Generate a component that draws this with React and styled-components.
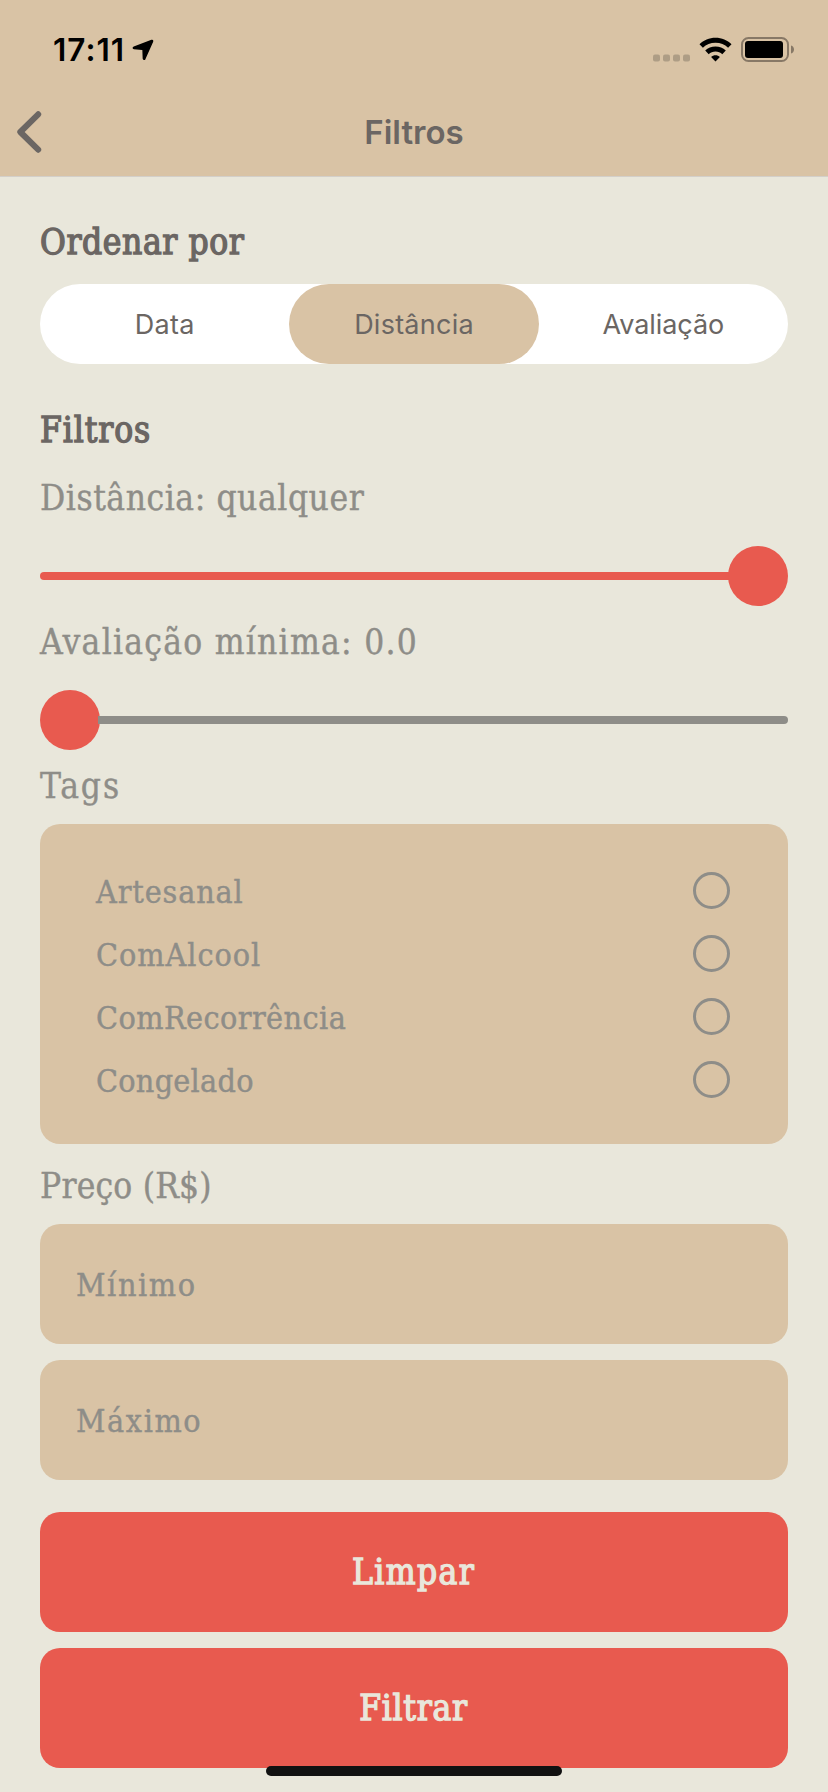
import React from "react";
import styled, { createGlobalStyle } from "styled-components";

const color = {
  sand: "#d9c3a5",
  paper: "#e9e7db",
  coral: "#e85a4f",
  stone: "#8e8d88",
  ink: "#6b6663",
};
const slab = `"DejaVu Serif Condensed", "DejaVu Serif", serif`;
const sans = `Inter, "Liberation Sans", sans-serif`;

const GlobalStyle = createGlobalStyle`
  *, *::before, *::after { box-sizing: border-box; }
  body { margin: 0; background: ${color.paper}; }
`;

const Screen = styled.div`
  position: relative;
  display: flex;
  flex-direction: column;
  width: 828px;
  height: 1792px;
  overflow: hidden;
  background: ${color.paper};
  font-family: ${slab};
`;

const Header = styled.header`
  height: 177px;
  background: ${color.sand};
  border-bottom: 1px solid #d3cfc9;
`;

const StatusBar = styled.div`
  display: flex;
  align-items: center;
  justify-content: space-between;
  height: 88px;
  padding: 12px 33px 0 53px;
  color: #000;
`;

const Clock = styled.span`
  display: flex;
  align-items: center;
  gap: 7px;
  font: 600 31.5px/40px ${sans};
  letter-spacing: 1px;
`;

const StatusIcons = styled.div`
  display: flex;
  align-items: center;
  gap: 9px;
`;

const NavBar = styled.nav`
  display: grid;
  grid-template-columns: 60px 1fr 60px;
  align-items: center;
  height: 88px;
`;

const BackButton = styled.button`
  display: flex;
  padding: 0 0 0 17px;
  border: 0;
  background: none;
  color: ${color.ink};
`;

const NavTitle = styled.h1`
  margin: 0;
  text-align: center;
  color: ${color.ink};
  font: 600 33px/48px ${sans};
`;

const Content = styled.main`
  display: flex;
  flex-direction: column;
  padding: 41px 40px 0;
`;

const SectionTitle = styled.h2`
  margin: 0;
  height: 48px;
  color: ${color.ink};
  font: 400 35px/48px ${slab};
  letter-spacing: ${(p) => p.$tracking}px;
  -webkit-text-stroke: 1.3px ${color.ink};
`;

const Label = styled.div`
  height: 48px;
  color: ${color.stone};
  font-size: 35px;
  line-height: 48px;
  letter-spacing: ${(p) => p.$tracking}px;
  white-space: nowrap;
  -webkit-text-stroke: 0.4px ${color.stone};
`;

const Segments = styled.div`
  display: grid;
  grid-template-columns: repeat(3, 1fr);
  height: 80px;
  margin: 18px 0 42px;
  border-radius: 40px;
  background: #fff;
`;

const Segment = styled.button`
  height: 80px;
  padding: 2px 0 0;
  border: 0;
  border-radius: 40px;
  background: ${(p) => (p.$active ? color.sand : "transparent")};
  color: ${color.ink};
  font: 400 27px/78px ${sans};
  letter-spacing: ${(p) => p.$tracking}px;
`;

const Sliders = styled.section`
  display: flex;
  flex-direction: column;
  gap: 12px;
  padding: 20px 0 12px;
`;

const SliderGroup = styled.div`
  display: flex;
  flex-direction: column;
  gap: 24px;
`;

const Track = styled.div`
  display: flex;
  align-items: center;
  height: 60px;
`;

const Bar = styled.div`
  flex: ${(p) => p.$share};
  height: 8px;
  border-radius: ${(p) => (p.$filled ? "4px 0 0 4px" : "0 4px 4px 0")};
  background: ${(p) => (p.$filled ? color.coral : color.stone)};
`;

const Thumb = styled.div`
  flex: none;
  width: 60px;
  height: 60px;
  margin: 0 ${(p) => (p.$at < 1 ? -2 : 0)}px 0 ${(p) => (p.$at > 0 ? -2 : 0)}px;
  border-radius: 50%;
  background: ${color.coral};
`;

const TagList = styled.ul`
  display: flex;
  flex-direction: column;
  height: 320px;
  margin: 14px 0 18px;
  padding: 35px 58px 0 56px;
  border-radius: 20px;
  background: ${color.sand};
  list-style: none;
`;

const TagRow = styled.li`
  display: flex;
  align-items: center;
  justify-content: space-between;
  height: 63px;
`;

const TagName = styled.span`
  padding-top: 4px;
  color: ${color.stone};
  font-size: 32px;
  line-height: 59px;
  letter-spacing: ${(p) => p.$tracking}px;
  -webkit-text-stroke: 0.4px ${color.stone};
`;

const Radio = styled.span`
  width: 37px;
  height: 37px;
  border: 3px solid ${color.stone};
  border-radius: 50%;
`;

const Fields = styled.div`
  display: flex;
  flex-direction: column;
  gap: 16px;
  margin: 14px 0 32px;
`;

const Field = styled.div`
  display: flex;
  align-items: center;
  height: 120px;
  padding: 1px 36px 0;
  border-radius: 20px;
  background: ${color.sand};
  color: ${color.stone};
  font-size: 32px;
  letter-spacing: 1.6px;
  -webkit-text-stroke: 0.4px ${color.stone};
`;

const Actions = styled.div`
  display: flex;
  flex-direction: column;
  gap: 16px;
`;

const Action = styled.button`
  height: 120px;
  padding: 1px 1px 0 0;
  border: 0;
  border-radius: 20px;
  background: ${color.coral};
  color: ${color.paper};
  font: 400 35px/119px ${slab};
  letter-spacing: ${(p) => p.$tracking}px;
  -webkit-text-stroke: 1.3px ${color.paper};
`;

const HomeIndicator = styled.div`
  position: absolute;
  left: 266px;
  bottom: 16px;
  width: 296px;
  height: 10px;
  border-radius: 5px;
  background: #111;
`;

const LocationArrow = () => (
  <svg width="22" height="22" viewBox="0 0 22 22">
    <path
      d="M19.700 1.500 2 8.200C1 8.600 1.200 9.500 2 9.600L10.300 10.300Q11 10.400 11.100 11L11.400 19.500C11.500 20.500 12.400 20.600 12.800 19.800L20.500 2.400Q20.700 1.200 19.700 1.500Z"
      fill="currentColor"
      stroke="currentColor"
      strokeWidth="1.500"
      strokeLinejoin="round"
    />
  </svg>
);

const StatusGlyphs = () => (
  <StatusIcons>
    <svg width="37" height="26" viewBox="0 0 37 26" fill="#ae9d85">
      {[0, 10, 20, 30].map((x) => (
        <rect key={x} x={x} y="17.500" width="7" height="7" rx="2" />
      ))}
    </svg>
    <svg width="33" height="26" viewBox="0 0 33 26" fill="#000">
      <path d="M16.500.700C10.200.700 4.600 3.200.5 7.200l3.400 3.500C7.200 7.500 11.600 5.700 16.500 5.700s9.300 1.800 12.600 5l3.400-3.500C28.400 3.200 22.800.700 16.500.700Z" />
      <path d="M16.500 9.500c-4 0-7.600 1.500-10.300 4.100l3.500 3.600c1.800-1.700 4.200-2.700 6.800-2.700s5 1 6.800 2.700l3.500-3.600C24.100 11 20.500 9.500 16.500 9.500Z" />
      <path d="M16.500 18.200c-1.700 0-3.200.6-4.400 1.700l4.400 4.600 4.400-4.600c-1.200-1.100-2.700-1.700-4.400-1.700Z" />
    </svg>
    <svg width="54" height="26" viewBox="0 0 54 26">
      <rect x="1" y="1" width="46" height="23" rx="6.500" fill="none" stroke="#877866" strokeWidth="2" />
      <rect x="4" y="4" width="38" height="17" rx="3" fill="#000" />
      <path d="M50 8.500c4 1 4 7 0 8Z" fill="#877866" />
    </svg>
  </StatusIcons>
);

const BackChevron = () => (
  <svg width="25" height="42" viewBox="0 0 25 42" fill="none">
    <path
      d="M21.200 3.300 3.300 21 21.200 38.700"
      stroke="currentColor"
      strokeWidth="6"
      strokeLinecap="round"
      strokeLinejoin="round"
    />
  </svg>
);

const tags = [
  ["Artesanal", 0.85],
  ["ComAlcool", 0.95],
  ["ComRecorrência", 0.42],
  ["Congelado", 0.25],
];

function Slider({ label, tracking, value }) {
  return (
    <SliderGroup>
      <Label $tracking={tracking}>{label}</Label>
      <Track>
        {value > 0 && <Bar $filled $share={value} />}
        <Thumb $at={value} />
        {value < 1 && <Bar $share={1 - value} />}
      </Track>
    </SliderGroup>
  );
}

export default function App() {
  return (
    <Screen>
      <GlobalStyle />
      <Header>
        <StatusBar>
          <Clock>
            17:11
            <LocationArrow />
          </Clock>
          <StatusGlyphs />
        </StatusBar>
        <NavBar>
          <BackButton aria-label="Voltar">
            <BackChevron />
          </BackButton>
          <NavTitle>Filtros</NavTitle>
        </NavBar>
      </Header>
      <Content>
        <SectionTitle $tracking={0.6}>Ordenar por</SectionTitle>
        <Segments>
          <Segment $tracking={0.3}>Data</Segment>
          <Segment $tracking={0.25} $active>
            Distância
          </Segment>
          <Segment $tracking={-0.05}>Avaliação</Segment>
        </Segments>
        <SectionTitle $tracking={0.9}>Filtros</SectionTitle>
        <Sliders>
          <Slider label="Distância: qualquer" tracking={0.56} value={1} />
          <Slider label="Avaliação mínima: 0.0" tracking={1.25} value={0} />
        </Sliders>
        <Label $tracking={1.9}>Tags</Label>
        <TagList>
          {tags.map(([name, tracking]) => (
            <TagRow key={name}>
              <TagName $tracking={tracking}>{name}</TagName>
              <Radio />
            </TagRow>
          ))}
        </TagList>
        <Label $tracking={0.2}>Preço (R$)</Label>
        <Fields>
          <Field>Mínimo</Field>
          <Field>Máximo</Field>
        </Fields>
        <Actions>
          <Action $tracking={1.4}>Limpar</Action>
          <Action $tracking={0.7}>Filtrar</Action>
        </Actions>
      </Content>
      <HomeIndicator />
    </Screen>
  );
}
